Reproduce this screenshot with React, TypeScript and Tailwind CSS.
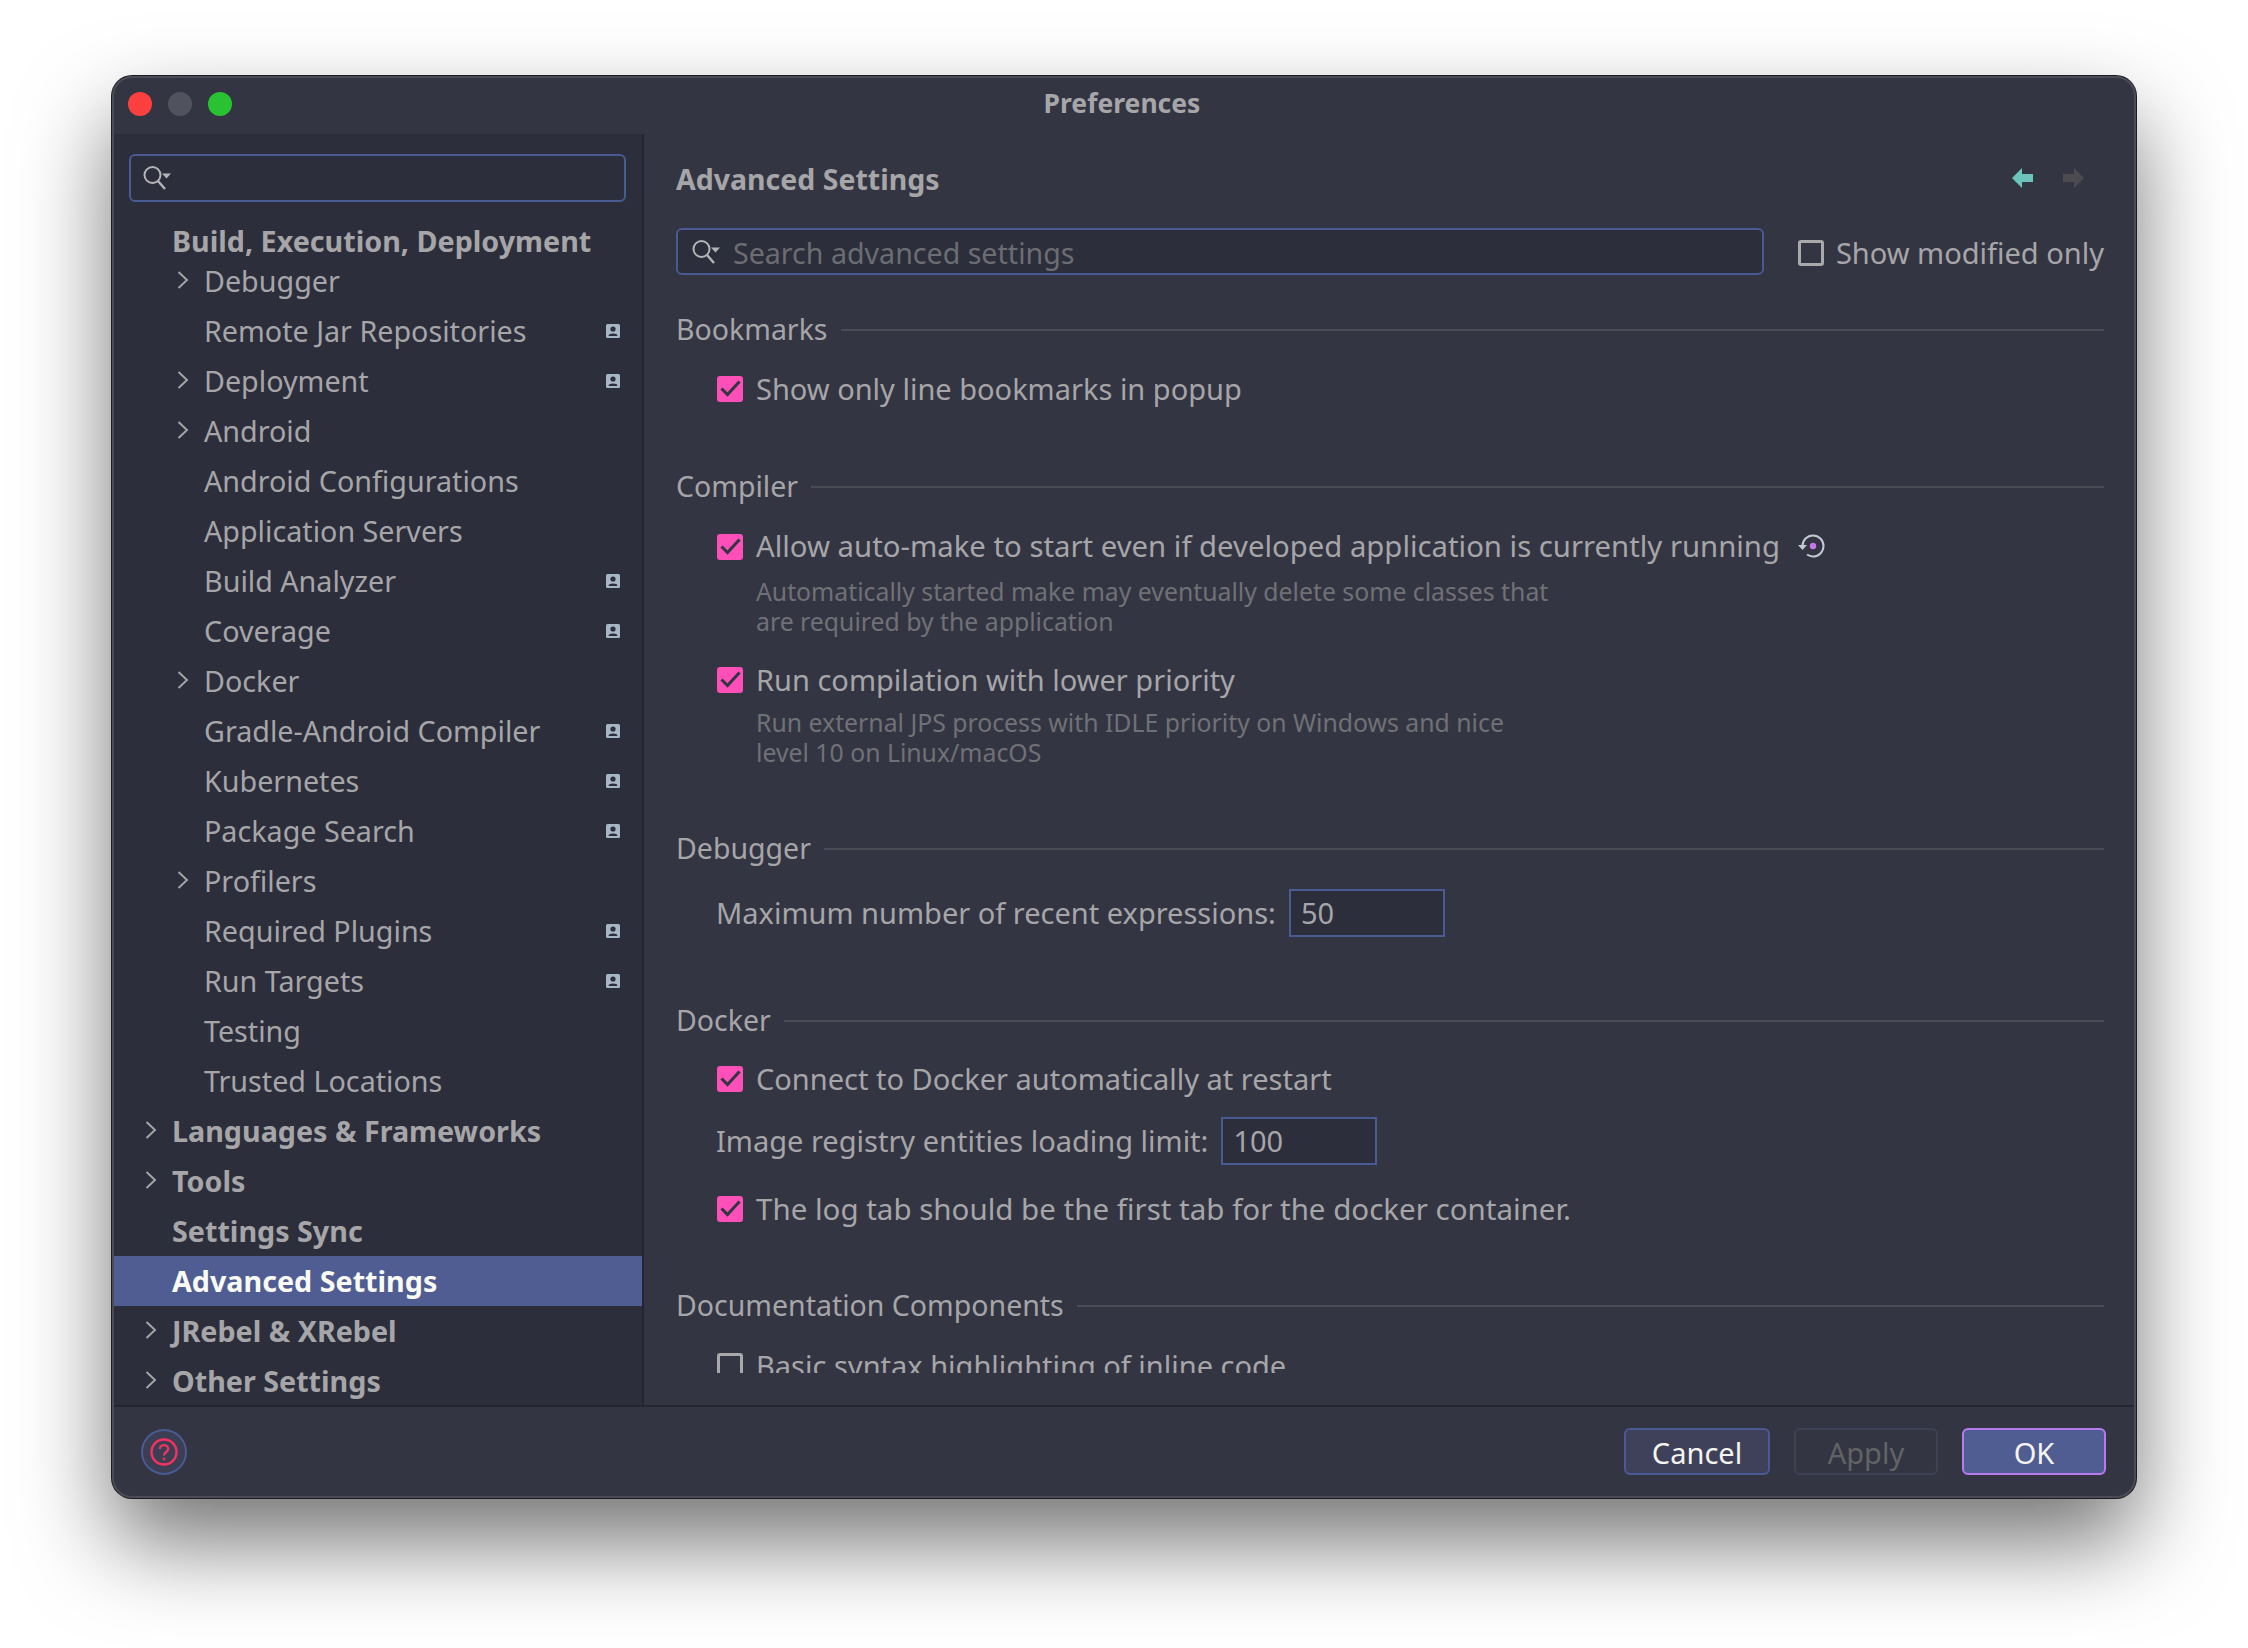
import { ReactNode } from 'react'

const font = "font-['Noto_Sans',sans-serif]"

type TreeItem = {
  label: string
  arrow?: boolean
  badge?: boolean
}

const nested: TreeItem[] = [
  { label: 'Debugger', arrow: true },
  { label: 'Remote Jar Repositories', badge: true },
  { label: 'Deployment', arrow: true, badge: true },
  { label: 'Android', arrow: true },
  { label: 'Android Configurations' },
  { label: 'Application Servers' },
  { label: 'Build Analyzer', badge: true },
  { label: 'Coverage', badge: true },
  { label: 'Docker', arrow: true },
  { label: 'Gradle-Android Compiler', badge: true },
  { label: 'Kubernetes', badge: true },
  { label: 'Package Search', badge: true },
  { label: 'Profilers', arrow: true },
  { label: 'Required Plugins', badge: true },
  { label: 'Run Targets', badge: true },
  { label: 'Testing' },
  { label: 'Trusted Locations' },
]

const topLevel = [
  { label: 'Languages & Frameworks', arrow: true },
  { label: 'Tools', arrow: true },
  { label: 'Settings Sync' },
  { label: 'Advanced Settings', selected: true },
  { label: 'JRebel & XRebel', arrow: true },
  { label: 'Other Settings', arrow: true },
]

function Chevron() {
  return (
    <svg width="12" height="18" viewBox="0 0 12 18" fill="none" stroke="#a3a4a8" strokeWidth="2" className="-mt-[2px]">
      <path d="M1.5 1 L10 9 L1.5 17" />
    </svg>
  )
}

function SearchIcon() {
  return (
    <svg width="28" height="24" viewBox="0 0 28 24" fill="none" className="shrink-0">
      <circle cx="9.5" cy="9" r="8" stroke="#b4b4b8" strokeWidth="2" />
      <path d="M15 15 L22 23" stroke="#b4b4b8" strokeWidth="2.4" />
      <path d="M19 7.5 H28 L23.5 12.5 Z" fill="#b4b4b8" />
    </svg>
  )
}

function Badge() {
  return (
    <svg width="14" height="14" viewBox="0 0 14 14" className="shrink-0">
      <rect width="14" height="14" rx="1.5" fill="#a5b6c4" />
      <circle cx="7" cy="5" r="2.6" fill="#2d2e3b" />
      <path d="M2.5 12 C2.5 8.8 11.5 8.8 11.5 12 Z" fill="#2d2e3b" />
    </svg>
  )
}

function Checkbox({ checked }: { checked?: boolean }) {
  if (!checked) {
    return <span className="h-[26px] w-[26px] shrink-0 rounded-[3px] border-[3px] border-[#a9a9ab]" />
  }
  return (
    <span className="h-[26px] w-[26px] shrink-0 rounded-[3px] bg-[#fc4fb8]">
      <svg width="26" height="26" viewBox="0 0 26 26" fill="none" stroke="#343542" strokeWidth="3">
        <path d="M4.5 12.5 L10.5 18.5 L22.5 5.5" />
      </svg>
    </span>
  )
}

function SectionTitle({ title, className }: { title: string; className: string }) {
  return (
    <div className={`flex h-[36px] shrink-0 items-center gap-[13px] ${className}`}>
      <span className="text-[28.5px]">{title}</span>
      <span className="mt-[2px] h-[2px] flex-1 bg-[#4a4b55]" />
    </div>
  )
}

function CheckRow({ checked, className, children }: { checked?: boolean; className: string; children: ReactNode }) {
  return (
    <div className={`ml-[41px] flex h-[36px] shrink-0 items-center gap-[13px] whitespace-nowrap ${className}`}>
      <Checkbox checked={checked} />
      <span>{children}</span>
    </div>
  )
}

function NumberRow({ label, value, className }: { label: string; value: string; className: string }) {
  return (
    <div className={`ml-[40px] flex h-[48px] shrink-0 items-center gap-[13px] ${className}`}>
      <span>{label}</span>
      <span className="flex h-[48px] w-[156px] items-center border-2 border-[#4a5a92] bg-[#2d2e3b] pl-[10px]">{value}</span>
    </div>
  )
}

function Hint({ lines, className }: { lines: string[]; className: string }) {
  return (
    <div className={`ml-[80px] shrink-0 text-[24.8px] leading-[30px] text-[#707176] ${className}`}>
      {lines.map(line => (
        <div key={line}>{line}</div>
      ))}
    </div>
  )
}

export default function App() {
  return (
    <div className={`h-[1648px] w-[2248px] overflow-hidden bg-white pl-[112px] pt-[76px] text-[29px] text-[#a6a6a9] ${font}`}>
      <div className="flex h-[1422px] w-[2024px] flex-col overflow-hidden rounded-[20px] border-2 border-[#4b4c55] bg-[#343542] shadow-[0_0_0_1px_#1c1c22,0_44px_90px_rgba(0,0,0,0.55)]">
        {/* title bar */}
        <div className="flex h-[56px] shrink-0 items-center gap-[16px] pb-[5px] pl-[14px]">
          <span className="h-[24px] w-[24px] rounded-full bg-[#fc4040]" />
          <span className="h-[24px] w-[24px] rounded-full bg-[#50525d]" />
          <span className="h-[24px] w-[24px] rounded-full bg-[#29c232]" />
          <span className="flex-1 pr-[138px] text-center text-[26.5px] font-bold">Preferences</span>
        </div>

        <div className="flex min-h-0 flex-1">
          {/* sidebar */}
          <div className="flex w-[530px] shrink-0 flex-col border-r-2 border-[#25252f] bg-[#2d2e3b]">
            <div className="ml-[15px] mr-[16px] mt-[20px] flex h-[48px] shrink-0 items-center rounded-[6px] border-2 border-[#4a5a92] pl-[12px]">
              <SearchIcon />
            </div>
            <div className="mt-[19px] flex h-[40px] items-center pl-[58px] text-[28.7px] font-bold">Build, Execution, Deployment</div>
            <div className="text-[28.7px]">
              {nested.map(item => (
                <div key={item.label} className="flex h-[50px] items-center pr-[22px] first:mb-[5px] first:h-[40px]">
                  <span className="flex w-[90px] justify-end pr-[15px]">{item.arrow && <Chevron />}</span>
                  <span className="flex-1">{item.label}</span>
                  {item.badge && <Badge />}
                </div>
              ))}
            </div>
            {topLevel.map(item => (
              <div
                key={item.label}
                className={`flex h-[50px] shrink-0 items-center text-[28.7px] font-bold ${item.selected ? 'bg-[#505d92] text-[#fafaf5]' : ''}`}
              >
                <span className="flex w-[58px] justify-end pr-[15px]">{item.arrow && <Chevron />}</span>
                {item.label}
              </div>
            ))}
          </div>

          {/* settings panel */}
          <div className="flex min-w-0 flex-1 flex-col pb-[32px] pl-[32px] pr-[30px]">
            <div className="mt-[25px] flex h-[40px] shrink-0 items-center justify-between pr-[20px]">
              <span className="text-[28.5px] font-bold">Advanced Settings</span>
              <div className="-mt-[2px] flex items-center gap-[30px]">
                <svg width="21" height="20" viewBox="0 0 21 20"><path d="M0 10 L10 0 V6 H21 V14 H10 V20 Z" fill="#6cc5ba" /></svg>
                <svg width="21" height="20" viewBox="0 0 21 20"><path d="M21 10 L11 0 V6 H0 V14 H11 V20 Z" fill="#4c4c50" /></svg>
              </div>
            </div>
            <div className="mt-[29px] flex shrink-0 items-center">
              <div className="flex h-[47px] w-[1093px] items-center gap-[13px] rounded-[6px] border-2 border-[#4a5a92] bg-[#2d2e3b] pl-[14px] text-[28.6px] text-[#6c6d72]">
                <SearchIcon />
                <span className="mt-[3px]">Search advanced settings</span>
              </div>
              <span className="ml-[34px] mt-[3px] h-[26px] w-[26px] rounded-[3px] border-[3px] border-[#a9a9ab]" />
              <span className="ml-[12px] mt-[3px] whitespace-nowrap">Show modified only</span>
            </div>

            <div className="flex min-h-0 flex-1 flex-col overflow-hidden">
              <SectionTitle title="Bookmarks" className="mt-[36px]" />
              <CheckRow checked className="mt-[24px]">Show only line bookmarks in popup</CheckRow>

              <SectionTitle title="Compiler" className="mt-[61px]" />
              <CheckRow checked className="mt-[25px] text-[29.3px]">
                <span className="flex items-center gap-[18px]">
                  Allow auto-make to start even if developed application is currently running
                  <svg width="28" height="26" viewBox="0 0 28 26" fill="none" className="-mt-[2px]">
                    <path d="M4.5 13 A10.5 10.5 0 1 1 15 23.5 A10.5 10.5 0 0 1 9 21.5" stroke="#c3c8d6" strokeWidth="2" />
                    <path d="M0 12 H9 L4.5 17 Z" fill="#c3c8d6" />
                    <circle cx="15" cy="13" r="3.2" fill="#c576e8" />
                  </svg>
                </span>
              </CheckRow>
              <Hint
                className="mt-[11px]"
                lines={['Automatically started make may eventually delete some classes that', 'are required by the application']}
              />
              <CheckRow checked className="mt-[26px]">Run compilation with lower priority</CheckRow>
              <Hint
                className="mt-[9px]"
                lines={['Run external JPS process with IDLE priority on Windows and nice', 'level 10 on Linux/macOS']}
              />

              <SectionTitle title="Debugger" className="mt-[63px]" />
              <NumberRow label="Maximum number of recent expressions:" value="50" className="mt-[23px]" />

              <SectionTitle title="Docker" className="mt-[65px]" />
              <CheckRow checked className="mt-[23px]">Connect to Docker automatically at restart</CheckRow>
              <NumberRow label="Image registry entities loading limit:" value="100" className="mt-[20px]" />
              <CheckRow checked className="mt-[26px] text-[29.5px]">The log tab should be the first tab for the docker container.</CheckRow>

              <SectionTitle title="Documentation Components" className="mt-[60px]" />
              <CheckRow className="mt-[25px]">Basic syntax highlighting of inline code</CheckRow>
            </div>
          </div>
        </div>

        {/* footer */}
        <div className="flex h-[91px] shrink-0 items-center border-t-2 border-[#25252f] pl-[27px] pr-[28px]">
          <span className="flex h-[46px] w-[46px] items-center justify-center rounded-full border-2 border-[#4a5a92] bg-[#3c3f53]">
            <svg width="28" height="28" viewBox="0 0 28 28" fill="none" stroke="#f5325f" strokeWidth="2.4">
              <circle cx="14" cy="14" r="12.5" />
              <path d="M9.8 11 C9.8 5.8 18.2 5.8 18.2 11 C18.2 14 14 14 14 17.5" />
              <circle cx="14" cy="21" r="1" fill="#f5325f" strokeWidth="1" />
            </svg>
          </span>
          <div className="ml-auto flex gap-[24px]">
            <span className="flex h-[47px] w-[146px] items-center justify-center rounded-[6px] border-2 border-[#4a5a92] bg-[#3e4159] pt-[2px] text-[#f5f5f0]">Cancel</span>
            <span className="flex h-[47px] w-[144px] items-center justify-center rounded-[6px] border-2 border-[#3e4054] pt-[2px] text-[#626366]">Apply</span>
            <span className="flex h-[47px] w-[144px] items-center justify-center rounded-[6px] border-2 border-[#b77af0] bg-[#505d92] pt-[2px] text-[#f5f5f0]">OK</span>
          </div>
        </div>
      </div>
    </div>
  )
}
